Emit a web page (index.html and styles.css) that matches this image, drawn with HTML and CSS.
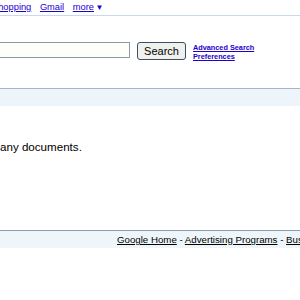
FILE: index.html
```html
<!DOCTYPE html>
<html lang="en">
<head>
  <meta charset="UTF-8" />
  <title>Google Search</title>
  <link rel="stylesheet" href="styles.css">
</head>
<body>

<div class="page">
  <!-- top bar -->
  <div class="gbar">
    <a href="#">Shopping</a>
    <a href="#">Gmail</a>
    <a href="#">more</a> <span class="arrow">&#9660;</span>
  </div>

  <!-- search form -->
  <form class="search">
    <input type="text" class="q">
    <button type="button" class="btn">Search</button>
    <div class="opts">
      <a href="#">Advanced Search</a>
      <a href="#">Preferences</a>
    </div>
  </form>

  <div class="resbar"></div>

  <p class="msg"><span class="lead">Your search did not match </span>any documents.</p>

  <div class="footer">
    <a href="#">Google Home</a> - <a href="#">Advertising Programs</a> - <a href="#">Business Solutions</a>
  </div>
</div>

</body>
</html>
```

FILE: styles.css
```css
body {
  margin: 0;
  font-family: "Liberation Sans", Arial, sans-serif;
  background: #fff;
  overflow: hidden;
}

.page {
  width: 600px;
}

a {
  color: #2200cc;
}

.gbar {
  font-size: 9.3px;
  height: 14px;
  line-height: 13px;
  padding-top: 1px;
  margin-left: -8px;
  border-bottom: 1px solid #c9d7f1;
  white-space: nowrap;
}

.gbar a {
  margin-right: 6px;
}

.gbar .arrow {
  font-size: 8px;
  color: #2200cc;
  margin-left: -7px;
}

.search {
  display: flex;
  align-items: flex-start;
  margin-top: 26px;
  margin-left: -25px;
}

.q {
  width: 149px;
  height: 14px;
  margin: 0;
  padding: 0 2px;
  border: 1px solid #8c9aa8;
  background: #fffffa;
}

.btn {
  margin: 0 0 0 7px;
  width: 49px;
  height: 18px;
  padding: 0;
  font-family: "Liberation Sans", Arial, sans-serif;
  font-size: 11px;
  color: #000;
  background: #f0f0ec;
  border: 1px solid #3c4f66;
  border-radius: 3px;
}

.opts {
  display: flex;
  flex-direction: column;
  margin-left: 7px;
  margin-top: 1px;
  font-size: 7.3px;
  line-height: 9px;
  font-weight: bold;
}

.resbar {
  margin-top: 27px;
  height: 17px;
  border-top: 1px solid #a6b4c8;
  background: #eef5fa;
}

.msg {
  display: flex;
  margin: 34px 0 0;
  font-size: 11.6px;
  white-space: pre;
}

.msg .lead {
  width: 0;
  overflow: hidden;
  direction: rtl;
}

.footer {
  margin-top: 77px;
  height: 17px;
  border-top: 1px solid #8e9bb0;
  background: #eef6fa;
  font-size: 9.7px;
  line-height: 17px;
  padding-left: 117px;
  white-space: nowrap;
  color: #000;
}

.footer a {
  color: #000;
}
```
